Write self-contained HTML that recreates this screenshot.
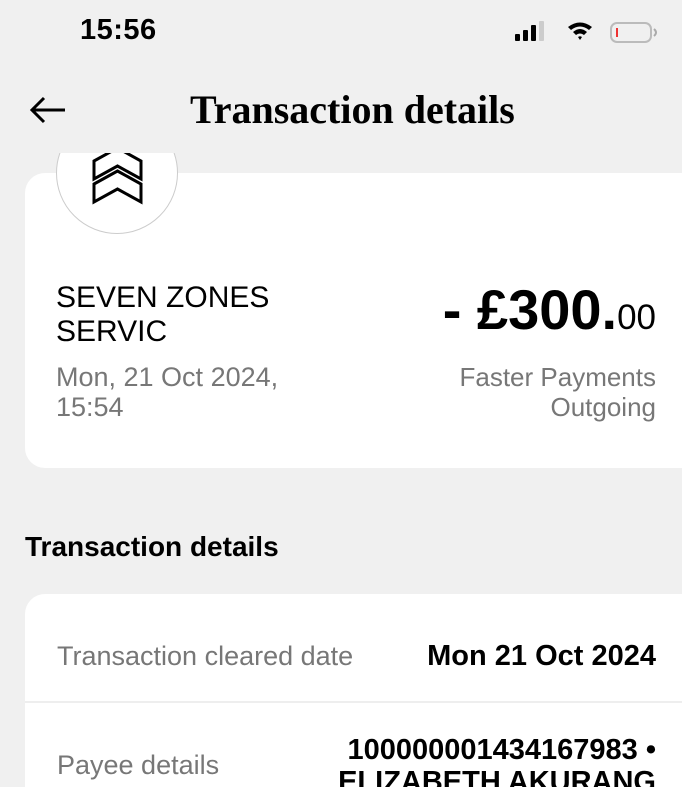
<!DOCTYPE html>
<html style="overflow:hidden;height:787px"><head><style>
body{margin:0;width:682px;height:787px;background:#f0f0f0;overflow:hidden;position:relative;font-family:"Liberation Sans",sans-serif;color:#000}
.a{position:absolute;white-space:nowrap}
.clip{position:absolute;left:0;top:153px;width:682px;height:634px;overflow:hidden}
.card{position:absolute;background:#fff;border-radius:20px}
</style></head><body>
<div class="a" style="left:80px;top:14px;font-size:29px;font-weight:bold;letter-spacing:0.5px">15:56</div>
<svg class="a" style="left:512px;top:20px" width="152" height="26">
<rect x="3" y="14" width="5" height="7" rx="1" fill="#000"/><rect x="11" y="10" width="5" height="11" rx="1" fill="#000"/><rect x="19" y="5" width="5" height="16" rx="1" fill="#000"/><rect x="27" y="1" width="5" height="20" rx="1" fill="#ccc"/>
<path d="M56 7 Q68 -2 80 7 L77 10 Q68 3 59 10Z M61 12 Q68 6 75 12 L72 15 Q68 12 64 15Z M66 17 L68 20 L70 17 Q68 15.5 66 17Z" fill="#000"/>
<rect x="99" y="3" width="40" height="19" rx="6" fill="none" stroke="#bbb" stroke-width="2"/><rect x="104" y="8" width="2" height="9" fill="#e33"/><path d="M142 9 Q146 12.5 142 16" stroke="#aaa" stroke-width="2" fill="none"/>
</svg>
<svg class="a" style="left:28px;top:95px" width="40" height="30"><path d="M37 15 H4 M16 3 L4 15 L16 27" stroke="#000" stroke-width="3" fill="none"/></svg>
<div class="a" style="left:190px;top:86px;font-family:'Liberation Serif',serif;font-size:40px;font-weight:bold">Transaction details</div>
<div class="clip">
<div class="card" style="left:25px;top:20px;width:690px;height:295px"></div>
<div class="a" style="left:56px;top:-41px;width:120px;height:120px;border-radius:50%;background:#fff;border:1px solid #ccc"></div>
<svg class="a" style="left:0;top:0" width="200" height="60"><path d="M94 8 L117.5 -5 L141 8 L141 26 L117.5 13 L94 26Z M94 31 L117.5 18 L141 31 L141 49 L117.5 36 L94 49Z" fill="none" stroke="#000" stroke-width="3" stroke-linejoin="miter"/></svg>
</div>
<div class="a" style="left:56px;top:281px;font-size:30px;line-height:34px">SEVEN ZONES<br>SERVIC</div>
<div class="a" style="left:56px;top:362px;font-size:27px;line-height:30px;color:#777">Mon, 21 Oct 2024,<br>15:54</div>
<div class="a" style="right:26px;top:277px;font-size:56px;font-weight:bold">- £300.<span style="font-size:35px;font-weight:normal">00</span></div>
<div class="a" style="right:26px;top:362px;font-size:26px;line-height:30px;color:#777;text-align:right">Faster Payments<br>Outgoing</div>
<div class="a" style="left:25px;top:531px;font-size:28px;font-weight:bold">Transaction details</div>
<div class="card" style="left:25px;top:594px;width:690px;height:230px"></div>
<div class="a" style="left:25px;top:701px;width:657px;height:2px;background:#eee"></div>
<div class="a" style="left:57px;top:641px;font-size:27px;color:#777">Transaction cleared date</div>
<div class="a" style="right:26px;top:640px;font-size:29px;font-weight:bold">Mon 21 Oct 2024</div>
<div class="a" style="left:57px;top:750px;font-size:27px;color:#777">Payee details</div>
<div class="a" style="right:26px;top:734px;font-size:29px;font-weight:bold;line-height:32px;text-align:right">100000001434167983 •<br>ELIZABETH AKURANG</div>
</body></html>
